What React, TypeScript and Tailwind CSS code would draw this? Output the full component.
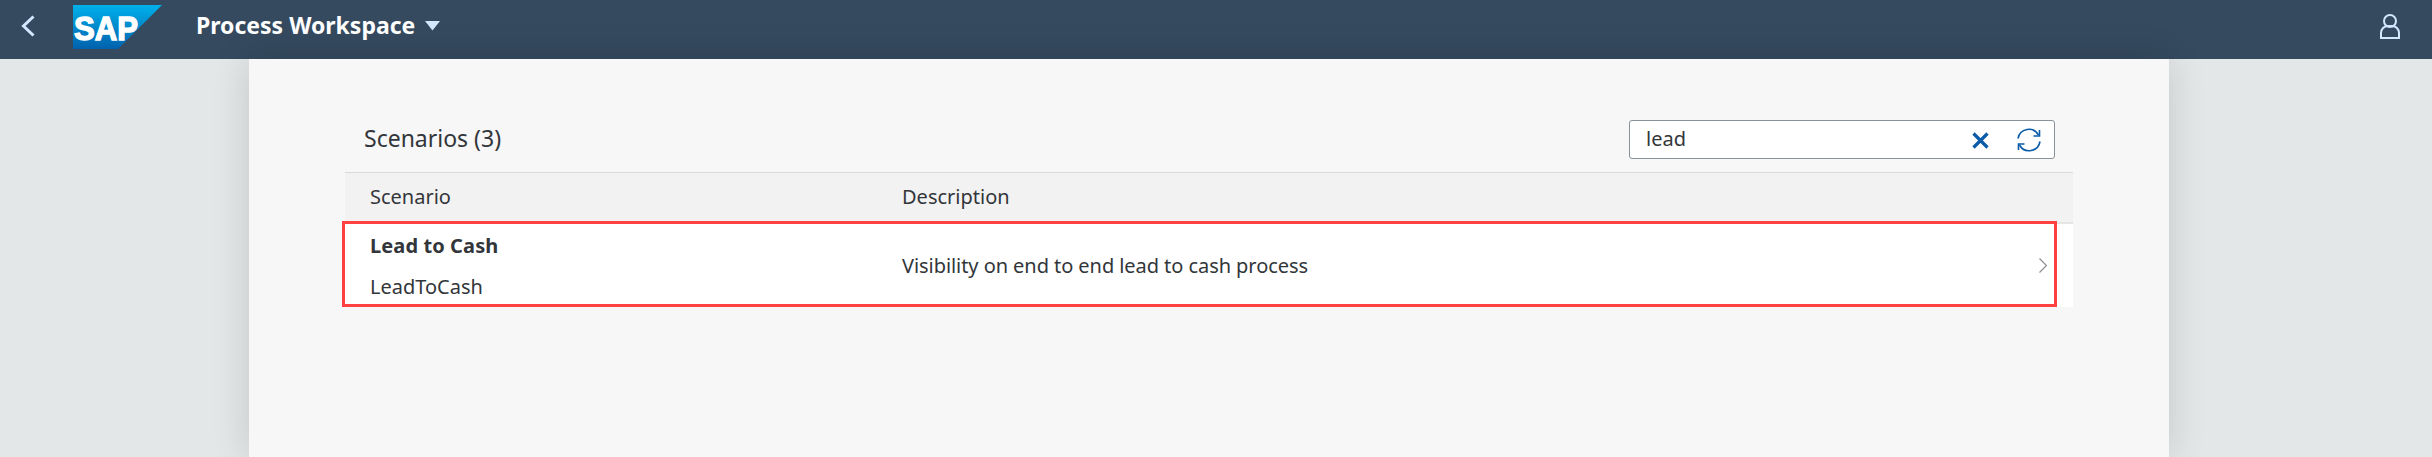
const font = "font-['Noto_Sans','Open_Sans',sans-serif]";

function SapLogo() {
  return (
    <svg width="90" height="45" viewBox="0 0 90 45" className="block">
      <defs>
        <linearGradient id="sapBlue" x1="0" y1="0" x2="0" y2="1">
          <stop offset="0" stopColor="#00b1eb" />
          <stop offset="1" stopColor="#0061ad" />
        </linearGradient>
      </defs>
      <polygon points="0,0 89,0 45,44 0,44" fill="url(#sapBlue)" />
      <text
        x="1"
        y="35"
        fill="#fff"
        stroke="#fff"
        strokeWidth="1.4"
        fontFamily="'Liberation Sans', sans-serif"
        fontWeight="700"
        fontSize="33"
        textLength="64"
        lengthAdjust="spacingAndGlyphs"
      >
        SAP
      </text>
    </svg>
  );
}

function ShellBar() {
  return (
    <header className="flex h-[59px] shrink-0 items-center bg-[#354a5f]">
      <svg width="14" height="22" viewBox="0 0 14 22" fill="none" stroke="#d1e8ff" strokeWidth="3" className="ml-[21px] mb-[7px]">
        <path d="M12.5 1.5L2.5 11l10 9.5" />
      </svg>
      <div className="ml-[38px] mb-[4px]">
        <SapLogo />
      </div>
      <span className="ml-[33px] mb-[9px] text-[23px] font-bold leading-none text-white">Process Workspace</span>
      <svg width="15" height="10" viewBox="0 0 15 10" className="ml-[10px] mb-[7px]">
        <polygon points="0,0 15,0 7.5,9.5" fill="#d1e8ff" />
      </svg>
      <svg width="22" height="27" viewBox="0 0 22 27" fill="none" stroke="#d1e8ff" strokeWidth="2" className="ml-auto mr-[31px] mb-[6px]">
        <circle cx="11" cy="8" r="6" />
        <path d="M2 25v-5a7 7 0 0 1 7-7h4a7 7 0 0 1 7 7v5z" />
      </svg>
    </header>
  );
}

function SearchBox() {
  return (
    <div className="flex h-[39px] w-[426px] items-center rounded-[3px] border border-[#89919a] bg-white pl-[16px] pr-[12px]">
      <span className="flex-1 pb-[1px] text-[20px] leading-none text-[#32363a]">lead</span>
      <svg width="17" height="17" viewBox="0 0 17 17" fill="none" stroke="#0a5ca8" strokeWidth="3.2" className="mt-[1px]">
        <path d="M1.5 1.5l14 14M15.5 1.5l-14 14" />
      </svg>
      <svg width="26" height="26" viewBox="0 0 26 26" fill="none" stroke="#0a5ca8" strokeWidth="1.6" className="ml-[27px]">
        <path d="M2 11.5A11 11 0 0 1 22.5 8" />
        <path d="M24 14.5A11 11 0 0 1 3.5 18" />
        <path d="M23.5 3v6h-6" />
        <path d="M2.5 23v-6h6" />
      </svg>
    </div>
  );
}

export default function App() {
  return (
    <div className={`flex h-[457px] w-[2432px] flex-col overflow-hidden bg-[#e3e7e8] text-[#32363a] ${font}`}>
      <ShellBar />
      <main className="ml-[249px] w-[1920px] flex-1 bg-[#f7f7f7] px-[96px] shadow-[0_0_36px_rgba(0,0,0,0.14)]">
        <div className="flex h-[113px] items-end pb-[13px] pl-[19px] pr-[18px]">
          <h2 className="mb-[6px] flex-1 text-[23px] leading-[30px]">Scenarios (3)</h2>
          <SearchBox />
        </div>
        <div className="grid h-[50px] grid-cols-[532px_1fr] items-center border-t border-[#d9d9d9] bg-[#f2f2f2] pb-[2px] pl-[25px] text-[20px]">
          <span>Scenario</span>
          <span>Description</span>
        </div>
        <div className="relative grid h-[85px] grid-cols-[532px_1fr_auto] items-center border-t-2 border-[#e5e5e5] bg-white pl-[25px] pr-[26px] text-[20px]">
          <div className="flex flex-col gap-[16px] leading-[25px]">
            <span className="font-bold tracking-[0.1px]">Lead to Cash</span>
            <span>LeadToCash</span>
          </div>
          <span className="tracking-[-0.06px]">Visibility on end to end lead to cash process</span>
          <svg width="8" height="15" viewBox="0 0 8 15" fill="none" stroke="#8c8c8c" strokeWidth="1.2">
            <path d="M0.5 0.5l7 7-7 7" />
          </svg>
          <div className="absolute left-[-3px] top-[-3px] h-[86px] w-[1715px] border-[3px] border-[#ff4040]" />
        </div>
      </main>
    </div>
  );
}
